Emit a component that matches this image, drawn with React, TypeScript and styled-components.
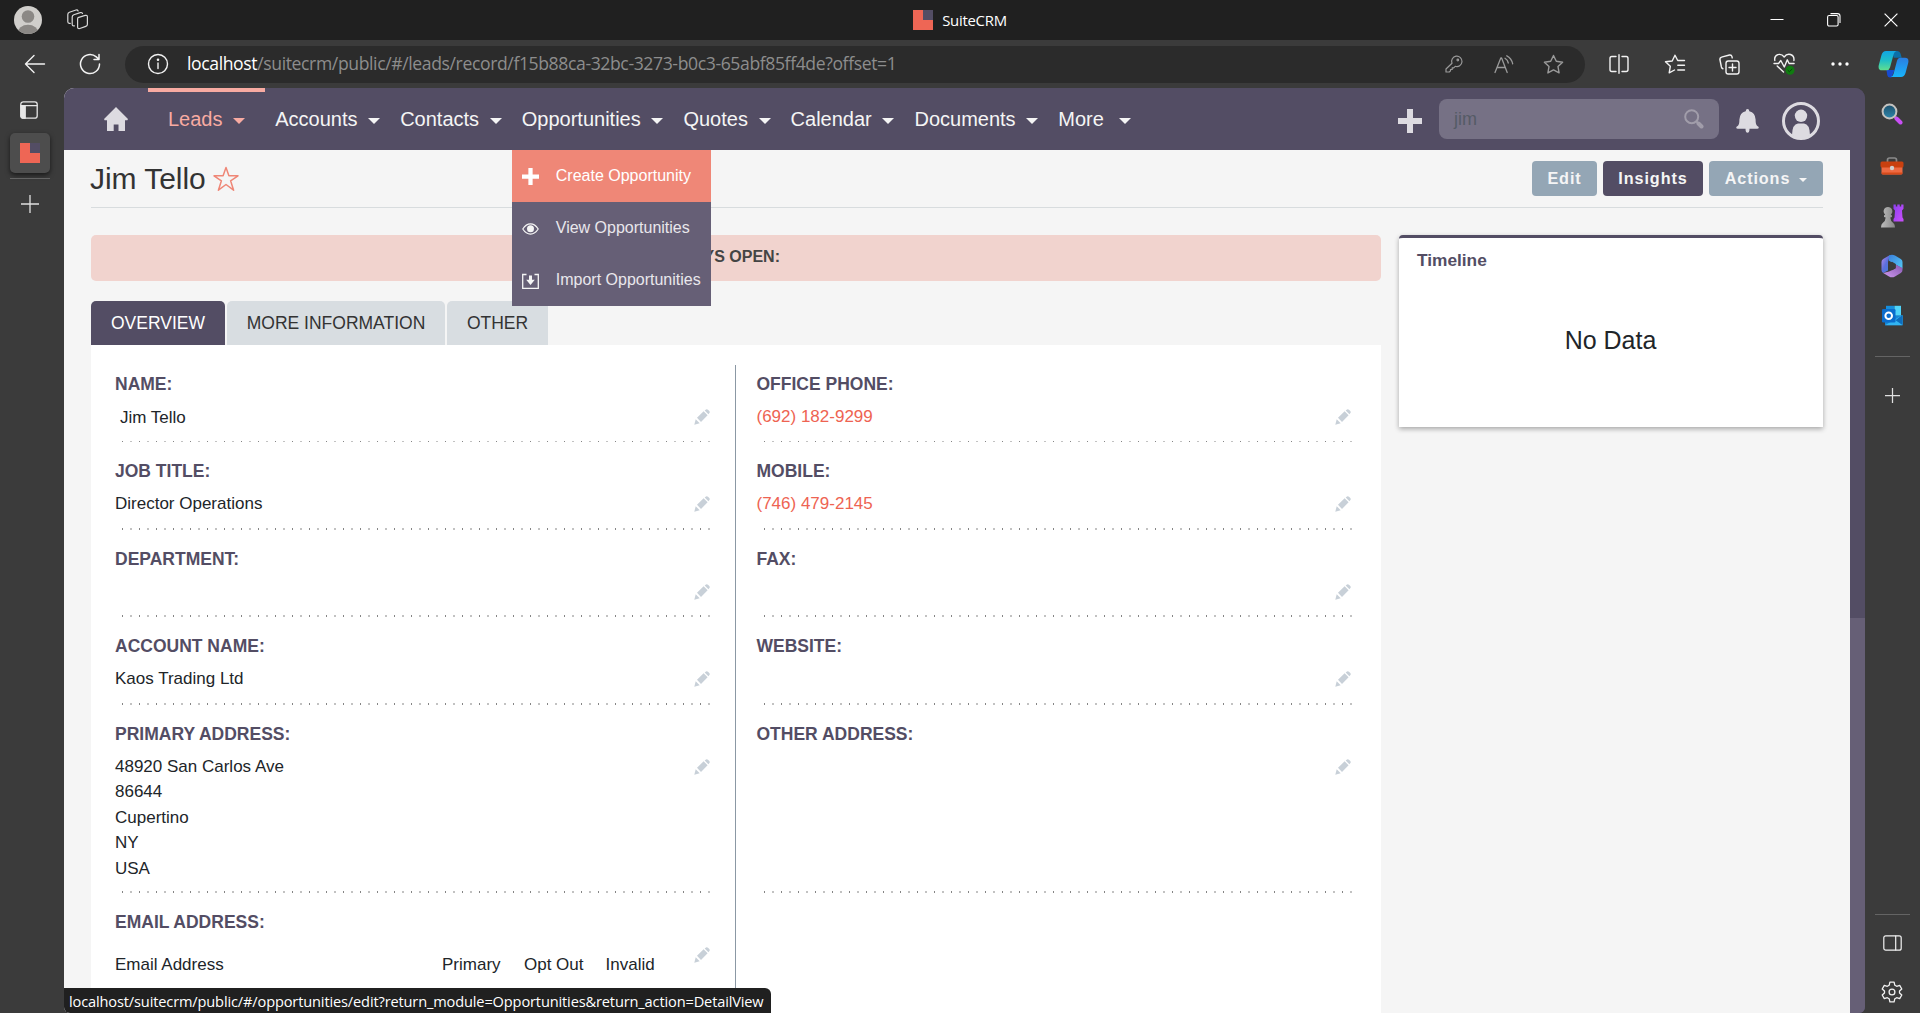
import React from "react";
import styled, { createGlobalStyle, css } from "styled-components";

const UI = `"Open Sans", "Noto Sans", sans-serif`;
const PAGE = `"Liberation Sans", Arial, sans-serif`;

const Global = createGlobalStyle`
  * { box-sizing: border-box; }
  body { margin: 0; background: #3b3b3b; font-family: ${PAGE}; overflow: hidden; }
  svg { display: block; flex: none; }
`;

/* ---------- browser chrome ---------- */

const Window = styled.div`
  display: flex;
  flex-direction: column;
  height: 100vh;
  overflow: hidden;
  background: #3b3b3b;
`;

const TitleBar = styled.header`
  display: grid;
  grid-template-columns: 1fr auto 1fr;
  align-items: center;
  flex: none;
  height: 40px;
  background: #202020;
  color: #fff;
`;

const TitleLeft = styled.div`
  display: flex;
  align-items: center;
  gap: 25px;
  padding-left: 14px;
`;

const TitleCenter = styled.div`
  display: flex;
  align-items: center;
  gap: 9px;
  font: 14.9px/20px ${UI};
  letter-spacing: -0.25px;
`;

const TitleRight = styled.div`
  display: flex;
  align-items: center;
  justify-content: flex-end;
  gap: 43px;
  padding-right: 22px;
`;

const Toolbar = styled.div`
  display: flex;
  align-items: center;
  flex: none;
  height: 48px;
`;

const Slot = styled.div<{ $w: number }>`
  display: flex;
  align-items: center;
  justify-content: center;
  flex: none;
  width: ${(p) => p.$w}px;
  height: 37px;
`;

const AddressBar = styled.div`
  display: flex;
  align-items: center;
  width: 1460px;
  height: 37px;
  margin-right: 6px;
  padding: 0 7px 0 2px;
  border-radius: 19px;
  background: #2b2b2b;
`;

const Url = styled.div`
  flex: 1;
  margin-left: -1px;
  padding-bottom: 2px;
  color: #8d8d8d;
  font: 17.6px/34px ${UI};
  letter-spacing: -0.39px;
  white-space: nowrap;
  b { color: #fff; font-weight: 400; }
`;

const Below = styled.div`
  display: flex;
  flex: 1;
  min-height: 0;
`;

const TabRail = styled.aside`
  display: flex;
  flex-direction: column;
  align-items: center;
  flex: none;
  width: 64px;
  padding: 13px 4px 0 0;
`;

const TabToggle = styled.div`
  padding-right: 2px;
`;

const RailTab = styled.div`
  display: flex;
  align-items: center;
  justify-content: center;
  width: 40px;
  height: 40px;
  margin: 14px 0 5px;
  border-radius: 5px;
  background: #4d4d4d;
  box-shadow: 0 2px 5px rgba(0, 0, 0, 0.6);
`;

const RailLine = styled.div<{ $w: number }>`
  flex: none;
  width: ${(p) => p.$w}px;
  height: 1px;
  background: #646464;
`;

const AppRail = styled.aside`
  display: flex;
  flex-direction: column;
  align-items: center;
  flex: none;
  width: 55px;
  padding-right: 1px;
`;

const RailCell = styled.div<{ $h: number }>`
  display: flex;
  align-items: center;
  justify-content: center;
  flex: none;
  height: ${(p) => p.$h}px;
`;

const Spacer = styled.div`
  flex: 1;
`;

const StatusTip = styled.div`
  position: fixed;
  left: 64px;
  bottom: 0;
  width: 707px;
  height: 25px;
  padding: 1px 0 0 5px;
  border-radius: 0 6px 0 6px;
  background: #202020;
  color: #fff;
  font: 14.6px/25px ${UI};
  letter-spacing: -0.145px;
  white-space: nowrap;
`;

/* ---------- CRM page ---------- */

const Viewport = styled.div`
  display: flex;
  width: 1801px;
  border-radius: 10px 10px 6px 6px;
  overflow: hidden;
  background: #534d64;
`;

const Page = styled.div`
  width: 1786px;
  height: 100%;
  background: #f5f5f5;
`;

const Scrollbar = styled.div`
  display: flex;
  align-items: flex-end;
  width: 15px;
  background: #534d64;
`;

const Thumb = styled.div`
  width: 15px;
  height: 395px;
  background: #665f76;
`;

const Nav = styled.nav`
  display: flex;
  align-items: stretch;
  height: 62px;
  background: #534d64;
  color: #f5f5f5;
`;

const Home = styled.div`
  display: flex;
  align-items: center;
  padding: 0 20px 0 40px;
`;

const NavItem = styled.div<{ $active?: boolean; $gap?: number }>`
  position: relative;
  display: flex;
  align-items: center;
  gap: ${(p) => p.$gap ?? 10.7}px;
  padding: 0 10px;
  font-size: 20px;
  white-space: nowrap;
  ${(p) =>
    p.$active &&
    css`
      padding: 0 20px;
      color: #f8aba2;
      box-shadow: inset 0 4px 0 #f8aba2;
    `}
`;

const Caret = styled.span<{ $size?: number }>`
  width: 0;
  height: 0;
  margin-top: ${(p) => (p.$size ? 3 : 4)}px;
  border: ${(p) => p.$size ?? 6}px solid transparent;
  border-top-color: currentColor;
  border-bottom: 0;
`;

const Menu = styled.div`
  position: absolute;
  z-index: 2;
  top: 62px;
  left: 0;
  width: 199px;
  background: #665f76;
`;

const MenuItem = styled.div<{ $hot?: boolean }>`
  display: flex;
  align-items: center;
  gap: 17px;
  height: 52px;
  padding: 0 0 1px 10px;
  color: ${(p) => (p.$hot ? "#fff" : "#e9e7ec")};
  background: ${(p) => (p.$hot ? "#ef8777" : "transparent")};
  font-size: 16px;
  svg { margin-top: 2px; }
`;

const NavTools = styled.div`
  display: flex;
  align-items: center;
  margin-left: auto;
  padding: 4px 30px 0 0;
`;

const Search = styled.div`
  display: flex;
  align-items: center;
  justify-content: space-between;
  width: 280px;
  height: 40px;
  margin: -4px 17px 0;
  padding: 0 15px;
  border-radius: 8px;
  background: #767185;
  color: #555b66;
  font-size: 18px;
`;

const Content = styled.main`
  padding: 0 27px;
`;

const RecordHeader = styled.div`
  display: flex;
  align-items: center;
  height: 58px;
  border-bottom: 1px solid #d8dcde;
  color: #333;
`;

const Title = styled.h1`
  margin: 0 7px 0 -1px;
  font-size: 30px;
  font-weight: 400;
  letter-spacing: -0.05px;
`;

const Button = styled.div<{ $w: number; $dark?: boolean }>`
  display: flex;
  align-items: center;
  justify-content: center;
  gap: 9px;
  width: ${(p) => p.$w}px;
  height: 35px;
  margin-left: 6px;
  border-radius: 4px;
  background: ${(p) => (p.$dark ? "#534d64" : "#94a6b5")};
  color: #f5f5f5;
  font-size: 16.2px;
  font-weight: 700;
  letter-spacing: 0.9px;
`;

const Columns = styled.div`
  display: flex;
  align-items: flex-start;
  gap: 18px;
  margin-top: 27px;
`;

const Record = styled.section`
  width: 1290px;
`;

const Banner = styled.div`
  display: flex;
  align-items: center;
  justify-content: flex-end;
  height: 46px;
  margin-bottom: 20px;
  padding: 0 601px 2px 0;
  border-radius: 5px;
  background: #f1d3ce;
  color: #444;
  font-size: 16px;
  font-weight: 700;
  line-height: 20px;
`;

const Tabs = styled.div`
  display: flex;
  gap: 2px;
`;

const Tab = styled.div<{ $w: number; $active?: boolean }>`
  width: ${(p) => p.$w}px;
  height: 44px;
  border-radius: 5px 5px 0 0;
  background: ${(p) => (p.$active ? "#534d64" : "#d8dde1")};
  color: ${(p) => (p.$active ? "#fff" : "#333")};
  font-size: 17.5px;
  line-height: 45px;
  text-align: center;
  white-space: nowrap;
`;

const Panel = styled.div`
  display: flex;
  height: 700px;
  padding-top: 10px;
  background: #fff;
`;

const FieldColumn = styled.div<{ $right?: boolean }>`
  width: ${(p) => (p.$right ? 645 : 644)}px;
  padding: ${(p) => (p.$right ? "0 30.5px 0 20.5px" : "0 25.5px 0 24px")};
`;

const Divider = styled.div`
  width: 1px;
  margin-top: 10px;
  background: #8b98a4;
`;

const Field = styled.div<{ $h: number }>`
  display: flex;
  flex-direction: column;
  height: ${(p) => p.$h}px;
  padding-top: 19px;
`;

const Label = styled.div`
  height: 20px;
  color: #534d64;
  font-size: 17.5px;
  font-weight: 700;
  line-height: 20px;
`;

const FieldBody = styled.div`
  display: flex;
  justify-content: space-between;
  flex: 1;
  padding-top: 9px;
  svg { margin-top: 6px; }
`;

type ValueKind = "text" | "link" | "name" | "table";

const Value = styled.div<{ $kind: ValueKind }>`
  padding-top: 1px;
  color: ${(p) => (p.$kind === "link" ? "#ee6352" : "#212529")};
  font-size: 17px;
  line-height: 25.4px;
  ${(p) => p.$kind === "name" && css`padding: 2px 0 0 5px;`}
  ${(p) =>
    p.$kind === "table" &&
    css`
      display: grid;
      grid-template-columns: 327px 82px 81.5px auto;
      padding-top: 11px;
    `}
`;

const Dots = styled.div<{ $thin?: boolean }>`
  height: ${(p) => (p.$thin ? 1 : 2)}px;
  margin: 0 -2px 0 6px;
  background: repeating-linear-gradient(
    90deg,
    transparent 0 1px,
    #858585 1px 2px,
    transparent 2px 9px,
    #c2c2c2 9px 11px,
    transparent 11px 17px
  );
`;

const Card = styled.section`
  width: 424px;
  height: 192px;
  padding: 12px 18px;
  border-top: 3px solid #534d64;
  border-radius: 4px 4px 0 0;
  background: #fff;
  box-shadow: 0 2px 5px rgba(0, 0, 0, 0.32);
`;

const CardTitle = styled.div`
  color: #534d64;
  font-size: 17.3px;
  font-weight: 700;
  line-height: 20px;
`;

const CardEmpty = styled.div`
  margin: 55px 1px 0 0;
  color: #212529;
  font-size: 25px;
  line-height: 30px;
  text-align: center;
`;

/* ---------- icons ---------- */

const line = { fill: "none", stroke: "#f2f2f2", strokeWidth: 1.4, strokeLinecap: "round", strokeLinejoin: "round" } as const;

const Logo = () => (
  <svg width="20" height="20" viewBox="0 0 20 20">
    <path d="M0 0h20v20H0z" fill="#ee6655" />
    <path d="M10 0h10v10H10z" fill="#534d64" />
  </svg>
);

const Avatar = () => (
  <svg width="28" height="28" viewBox="0 0 28 28">
    <clipPath id="avatar"><circle cx="14" cy="14" r="14" /></clipPath>
    <g clipPath="url(#avatar)">
      <path d="M0 0h28v28H0z" fill="#d0cecb" />
      <circle cx="14" cy="10.5" r="6.3" fill="#8b8885" />
      <ellipse cx="14" cy="27" rx="10.5" ry="8.3" fill="#8b8885" />
    </g>
  </svg>
);

const Workspaces = () => (
  <svg width="22" height="22" viewBox="0 0 22 22" {...line} stroke="#d8d8d8" strokeWidth={1.2}>
    <path d="M11 8.6l7.2-2.2q2.2-.5 2.2 1.5v7.3q0 1.6-1.6 2.2l-6 2.1q-2.2.5-2.2-1.5v-7.4q0-1.5.4-2z" />
    <path d="M7.4 16.8l-.7.1q-1.5 0-1.5-1.5V8q0-1.6 1.6-2.2l6.5-2.2q1.6-.4 2.2.9" />
    <path d="M3.3 14.3l-1 .1Q.8 14.3.8 12.8V5.4q0-1.6 1.6-2.2L9 1q1.5-.4 2.1.9" />
  </svg>
);

const Back = () => (
  <svg width="22" height="20" viewBox="0 0 22 20" {...line}><path d="M20.5 10H1.5M10 1.5L1.5 10l8.5 8.5" /></svg>
);

const Reload = () => (
  <svg width="22" height="22" viewBox="0 0 22 22" {...line} strokeWidth={1.5}><path d="M20.5 11a9.5 9.5 0 1 1-3.2-7.1l2.5 2.4M20 1.5v5h-5" /></svg>
);

const Info = () => (
  <svg width="22" height="22" viewBox="0 0 22 22" {...line}>
    <circle cx="11" cy="11" r="9.5" /><path d="M11 10v5.5" /><circle cx="11" cy="6.8" r=".6" fill="#fff" />
  </svg>
);

const Key = () => (
  <svg width="18" height="18" viewBox="0 0 18 18" {...line} stroke="#9a9a9a" strokeWidth={1.2}>
    <path d="M7 8.3a5.2 5.2 0 1 1 3.2 3L8.7 12.8H7.2v1.7H5.5v1.3L4.3 17H1v-3z" /><circle cx="12.8" cy="5" r=".8" />
  </svg>
);

const ReadAloud = () => (
  <svg width="20" height="19" viewBox="0 0 20 19" {...line} stroke="#9a9a9a" strokeWidth={1.3}>
    <path d="M1 17.5L6.8 3h.8l5.6 14.5M3 12.5h8.4M11 3.3q2.6 1.5 3.3 4.7M12.8.8q4.6 2.2 5.9 8" />
  </svg>
);

const Star = () => (
  <svg width="21" height="21" viewBox="0 0 21 21" {...line} stroke="#9a9a9a">
    <path d="M10.5 1.5l2.8 5.8 6.3.9-4.6 4.4 1.1 6.3-5.6-3-5.6 3 1.1-6.3-4.6-4.4 6.3-.9z" />
  </svg>
);

const Split = () => (
  <svg width="20" height="20" viewBox="0 0 20 20" {...line}>
    <path d="M7 2.5H2.8Q1 2.5 1 4.5v11q0 2 1.8 2H7M13 2.5h4.2Q19 2.5 19 4.5v11q0 2-1.8 2H13M10 .8v18.4" />
  </svg>
);

const Favorites = () => (
  <svg width="22" height="20" viewBox="0 0 22 20" {...line}>
    <path d="M20.5 6.5h-6.8L11 1.2 8.2 7 1.5 7.8l4.8 4.5L5.2 18.8l5.3-2.8M13.8 11.3h6.7M13.8 16h6.7" />
  </svg>
);

const Collections = () => (
  <svg width="21" height="21" viewBox="0 0 21 21" {...line}>
    <rect x="7" y="7" width="13" height="13" rx="2.2" /><path d="M13.5 10v7M10 13.5h7M4 14.8Q2.7 14.3 2.4 13L.9 5.5Q.7 3.6 2.5 3.2L10.5 1q2-.3 2.5 1.6l.2 1.3" />
  </svg>
);

const Heart = () => (
  <svg width="23" height="22" viewBox="0 0 23 22" {...line}>
    <path d="M1.8 7.5Q1 3 4.8 1.6 8.7.5 11.2 4 13.5.6 17.5 1.5q4 1.4 3.4 6M4.2 13l6.3 6M1 10.5h4.5l2.3-3 3.5 6.5 3-7.2 1.8 3.7h5" />
    <circle cx="17" cy="17.3" r="4.5" fill="#107c10" stroke="none" /><path d="M15 17.4l1.4 1.3 2.6-2.5" stroke="#064806" strokeWidth="1" />
  </svg>
);

const Ellipsis = () => (
  <svg width="18" height="4" viewBox="0 0 18 4" fill="#fff"><circle cx="2" cy="2" r="1.7" /><circle cx="9" cy="2" r="1.7" /><circle cx="16" cy="2" r="1.7" /></svg>
);

const Copilot = () => (
  <svg width="31" height="28" viewBox="0 0 31 28">
    <defs>
      <linearGradient id="cp1" x1="0" y1="0" x2="0" y2="1"><stop stopColor="#11a5e4" /><stop offset=".5" stopColor="#20bfc6" /><stop offset="1" stopColor="#61df8e" /></linearGradient>
      <linearGradient id="cp2" x1="0" y1="0" x2="0" y2="1"><stop stopColor="#2b7de0" /><stop offset="1" stopColor="#18b5fb" /></linearGradient>
    </defs>
    <path d="M14 1h5.5q2.3 0 3 2.5l1.2 4.2h-8z" fill="#0b6fa8" />
    <path d="M8.5 20h8l-3 7.5H12q-2.2 0-2.8-2.5z" fill="#174bd0" />
    <path d="M8 1h10.5q-2 .6-2.8 3L12 17.5Q11.2 20.3 8.5 20.3H4Q-.3 20.3.8 15L3.5 5Q4.7 1 8 1z" fill="url(#cp1)" />
    <path d="M23 27H12.8q2-.6 2.7-3L19 10.8Q19.9 7.7 22.5 7.7H27q4.3 0 3.2 5.2L27.5 23Q26.3 27 23 27z" fill="url(#cp2)" />
  </svg>
);

const Minimize = () => <svg width="14" height="14" viewBox="0 0 14 14"><path d="M.5 6.5h13" stroke="#fff" /></svg>;
const Restore = () => (
  <svg width="14" height="14" viewBox="0 0 14 14" fill="none" stroke="#fff" strokeWidth="1.1"><rect x=".6" y="2.5" width="10.5" height="10.5" rx="1.5" /><path d="M3.5.6h7q2.5 0 2.5 2.5v7" /></svg>
);
const Close = () => <svg width="14" height="14" viewBox="0 0 14 14"><path d="M.6.6l12.8 12.8M13.4.6L.6 13.4" stroke="#fff" strokeWidth="1.2" /></svg>;

const TabPanel = () => (
  <svg width="18" height="18" viewBox="0 0 18 18" {...line} stroke="#e6e6e6" strokeWidth={1.3}>
    <rect x=".8" y=".8" width="16.4" height="16.4" rx="2.5" /><path d="M1 4.7h16M5 5v12" /><path d="M1 5h4v12H3q-2 0-2-2z" fill="#e6e6e6" />
  </svg>
);

const Plus = ({ size, w = 1.3 }: { size: number; w?: number }) => (
  <svg width={size} height={size} viewBox="0 0 18 18" fill="none" stroke="#e0e0e0" strokeWidth={w}><path d="M9 0v18M0 9h18" /></svg>
);

const SearchApp = () => (
  <svg width="22" height="22" viewBox="0 0 22 22">
    <defs><linearGradient id="lens" x1="0" y1="0" x2="0" y2="1"><stop stopColor="#1d4f6c" /><stop offset="1" stopColor="#2f87ab" /></linearGradient></defs>
    <path d="M12.5 12.5l3 3" stroke="#999" strokeWidth="2.5" />
    <circle cx="8.5" cy="8.5" r="6.9" fill="url(#lens)" stroke="#c4c2bf" strokeWidth="2" />
    <path d="M15.5 15.5l4 4" stroke="#c94ff5" strokeWidth="4" strokeLinecap="round" />
  </svg>
);

const Toolbox = () => (
  <svg width="24" height="18" viewBox="0 0 24 18">
    <path d="M7.5 5V3q0-2 2-2h5q2 0 2 2v2" fill="none" stroke="#8a8a8a" strokeWidth="1.7" />
    <rect x="1.5" y="8" width="21" height="9.5" rx="1.5" fill="#ee6a42" />
    <rect x=".5" y="4.5" width="23" height="6" rx="1.5" fill="#c9400f" />
    <path d="M1.5 15.5h21v.6q0 1.4-1.5 1.4H3q-1.5 0-1.5-1.4z" fill="#d64a1b" />
    <circle cx="12" cy="11" r="2.2" fill="#cfcfcf" />
  </svg>
);

const Chess = () => (
  <svg width="24" height="24" viewBox="0 0 24 24">
    <defs>
      <linearGradient id="rook" x1="0" y1="0" x2="1" y2="1"><stop stopColor="#8d3ff0" /><stop offset="1" stopColor="#cb50fb" /></linearGradient>
      <linearGradient id="pawn" x1="0" y1="0" x2="1" y2="0"><stop stopColor="#bdbdbd" /><stop offset="1" stopColor="#868686" /></linearGradient>
    </defs>
    <path d="M13.5.5h2.3v2h1.5v-2h2.4v2h1.5v-2h2.3v4.3L22 6.5l.5 7 1 1.5v2.5h-10V15l1-1.5.5-7-1.5-1.7z" fill="url(#rook)" />
    <path d="M8 3a4.3 4.3 0 0 1 2.8 7.6l1.2.9v1.500l-1.700.5q.3 4 3 5.500 1.700 1 1.700 4.500H1q0-3.500 1.700-4.500 2.700-1.500 3-5.500L4 13v-1.500l1.200-.9A4.300 4.300 0 0 1 8 3z" fill="url(#pawn)" />
  </svg>
);

const M365 = () => (
  <svg width="22" height="24" viewBox="0 0 22 24">
    <defs>
      <linearGradient id="mL" x1="0" y1="0" x2="1" y2="1"><stop stopColor="#b98bea" /><stop offset=".5" stopColor="#5b6fdd" /><stop offset="1" stopColor="#3f7fdc" /></linearGradient>
      <linearGradient id="mR" x1="0" y1="0" x2="1" y2="1"><stop stopColor="#3b7fdb" /><stop offset="1" stopColor="#53cbf6" /></linearGradient>
      <linearGradient id="mB" x1="0" y1="1" x2="1" y2="0"><stop stopColor="#cf9af0" /><stop offset="1" stopColor="#8557b0" /></linearGradient>
    </defs>
    <path d="M9 1L2.2 4.9Q.5 6 .5 8v8q0 2 1.7 3.1L7 16.5V8z" fill="url(#mL)" />
    <path d="M8 1.6q3-1.8 6 0L19.8 4.9Q21.5 6 21.5 8v6.5L14.5 10.5 8 6.8z" fill="url(#mR)" />
    <path d="M21.5 14v2q0 2-1.7 3.1L14 22.4q-3 1.8-6 0L2.2 19.1 8 17.5l6.5-3v-4z" fill="url(#mB)" />
    <path d="M11 7.7l3.8 2.2v4.2L11 16.3l-3.800-2.200V9.900z" fill="#3b3b3b" />
  </svg>
);

const Outlook = () => (
  <svg width="21" height="21" viewBox="0 0 21 21">
    <path d="M4 .8h8.5v10H4z" fill="#168edb" /><path d="M12.5.8H19v10h-6.5z" fill="#4fd4fa" />
    <path d="M3 10.5h17.5v9.7H3z" fill="#1687d6" /><path d="M3 20.2L20.5 10v10.2z" fill="#31b4f2" />
    <path d="M20.5 10v10l-7-4.8z" fill="#0d6dbd" />
    <rect x="0" y="4" width="13.5" height="13.5" rx="1.3" fill="#0a6ccc" />
    <circle cx="6.7" cy="10.7" r="3.3" fill="none" stroke="#fff" strokeWidth="2" />
  </svg>
);

const SidePanel = () => (
  <svg width="19" height="16" viewBox="0 0 19 16" {...line} strokeWidth={1.2}><rect x=".8" y=".8" width="17.4" height="14.4" rx="2" /><path d="M12.7 1v14" /></svg>
);

const Gear = () => (
  <svg width="22" height="22" viewBox="0 0 22 22" {...line} strokeWidth={1.3}>
    <path d="M8.9 1.2h4.2l.7 3 1.9 1.1 3-.9 2.1 3.6-2.3 2.1v1.8l2.3 2.1-2.1 3.6-3-.9-1.9 1.1-.7 3H8.9l-.7-3-1.9-1.1-3 .9-2.1-3.6 2.3-2.1v-1.8L1.2 8l2.1-3.6 3 .9 1.9-1.1z" />
    <circle cx="11" cy="11" r="2.9" />
  </svg>
);

const HomeIcon = () => (
  <svg width="24" height="24" viewBox="0 0 24 24" fill="#dddbe1"><path d="M12 0l12 12-.6 1.2H21V24h-6.5v-6.5h-4.8V24H3V13.2H.6L0 12z" /></svg>
);

const BigPlus = ({ size = 24, color = "#dddbe1" }: { size?: number; color?: string }) => (
  <svg width={size} height={size} viewBox="0 0 24 24" fill={color}><path d="M9 0h6v9h9v6h-9v9H9v-9H0V9h9z" /></svg>
);

const Eye = () => (
  <svg width="17" height="12" viewBox="0 0 17 12"><path d="M.8 6Q4 .9 8.5.9T16.2 6Q13 11.1 8.5 11.1T.8 6z" fill="none" stroke="#f5f5f5" strokeWidth="1.2" /><circle cx="8.5" cy="5.8" r="3.5" fill="#f5f5f5" /></svg>
);

const Import = () => (
  <svg width="17" height="16" viewBox="0 0 17 16"><path d="M4.5 1.5H.7v13.8h15.6V1.5h-3.8" fill="none" stroke="#f5f5f5" strokeWidth="1.3" /><path d="M7 2.5h3v4.3h2.8L8.5 12 4.2 6.8H7z" fill="#f5f5f5" /></svg>
);

const SearchIcon = () => (
  <svg width="20" height="20" viewBox="0 0 20 20" fill="none" stroke="#a19daa"><circle cx="7.7" cy="7.7" r="6.5" strokeWidth="2" /><path d="M12.5 12.5l2 2" strokeWidth="2" /><path d="M14.5 14.5l3 3" strokeWidth="4" strokeLinecap="round" /></svg>
);

const Bell = () => (
  <svg width="23" height="24" viewBox="0 0 23 24" fill="#dddbe1"><path d="M11.5 0q1.7 0 1.8 2.2 6 1.5 6.3 8.3 0 5 1.4 6.2 2 .8 1.8 2-.2 1-1.6 1h-7.7q0 4-2 4t-2-4H1.8q-1.4 0-1.6-1-.2-1.2 1.8-2 1.4-1.2 1.4-6.200Q3.700 3.700 9.700 2.200 9.800 0 11.500 0z" /></svg>
);

const User = () => (
  <svg width="38" height="38" viewBox="0 0 38 38">
    <circle cx="19" cy="19" r="17.5" fill="none" stroke="#dddbe1" strokeWidth="3" />
    <circle cx="19" cy="13.8" r="6.2" fill="#dddbe1" />
    <path d="M10 33q.3-11 6-11.5h6q5.7.5 6 11.5-9 6-18 0z" fill="#dddbe1" />
  </svg>
);

const StarOutline = () => (
  <svg width="26" height="26" viewBox="0 0 26 26" fill="none" stroke="#ef8777" strokeWidth="1.5" strokeLinejoin="round"><path d="M13 1.5l2.9 8.2 9.1.1-7.4 5 3 9.4-7.6-5.7-7.6 5.7 3-9.4L1 9.8l9.1-.1z" /></svg>
);

const Pencil = () => (
  <svg width="16" height="16" viewBox="0 0 16 16" fill="#c8d0d8"><path d="M1.7 10.2l4 4L.3 15.7zM3 8.8l6.6-6.5 4 4L7 12.9zM10.7 1.5L12 .5q1-.6 2 .3l1.3 1.3q.8 1 .1 2l-1 1.2z" /></svg>
);

/* ---------- data ---------- */

type FieldData = { label: string; lines?: string[]; kind?: ValueKind; h: number };

const leftFields: FieldData[] = [
  { label: "NAME:", lines: ["Jim Tello"], kind: "name", h: 87 },
  { label: "JOB TITLE:", lines: ["Director Operations"], h: 88 },
  { label: "DEPARTMENT:", h: 87 },
  { label: "ACCOUNT NAME:", lines: ["Kaos Trading Ltd"], h: 88 },
  { label: "PRIMARY ADDRESS:", lines: ["48920 San Carlos Ave", "86644", "Cupertino", "NY", "USA"], h: 188 },
];

const rightFields: FieldData[] = [
  { label: "OFFICE PHONE:", lines: ["(692) 182-9299"], kind: "link", h: 87 },
  { label: "MOBILE:", lines: ["(746) 479-2145"], kind: "link", h: 88 },
  { label: "FAX:", h: 87 },
  { label: "WEBSITE:", h: 88 },
  { label: "OTHER ADDRESS:", h: 188 },
];

const renderField = (f: FieldData, i: number) => (
  <Field key={f.label} $h={f.h}>
    <Label>{f.label}</Label>
    <FieldBody>
      <Value $kind={f.kind ?? "text"}>
        {f.lines?.map((l) => <div key={l}>{l}</div>)}
      </Value>
      <Pencil />
    </FieldBody>
    <Dots $thin={i === 0} />
  </Field>
);

export default function App() {
  return (
    <Window>
      <Global />
      <TitleBar>
        <TitleLeft><Avatar /><Workspaces /></TitleLeft>
        <TitleCenter><Logo />SuiteCRM</TitleCenter>
        <TitleRight><Minimize /><Restore /><Close /></TitleRight>
      </TitleBar>

      <Toolbar>
        <Slot $w={70}><Back /></Slot>
        <Slot $w={40}><Reload /></Slot>
        <Slot $w={15} />
        <AddressBar>
          <Slot $w={61}><Info /></Slot>
          <Url><b>localhost</b>/suitecrm/public/#/leads/record/f15b88ca-32bc-3273-b0c3-65abf85ff4de?offset=1</Url>
          <Slot $w={50}><Key /></Slot>
          <Slot $w={50}><ReadAloud /></Slot>
          <Slot $w={49}><Star /></Slot>
        </AddressBar>
        <Slot $w={56}><Split /></Slot>
        <Slot $w={55}><Favorites /></Slot>
        <Slot $w={55}><Collections /></Slot>
        <Slot $w={55}><Heart /></Slot>
        <Slot $w={55}><Ellipsis /></Slot>
        <Slot $w={52}><Copilot /></Slot>
      </Toolbar>

      <Below>
        <TabRail>
          <TabToggle><TabPanel /></TabToggle>
          <RailTab><Logo /></RailTab>
          <RailLine $w={40} />
          <RailCell $h={50}><Plus size={18} /></RailCell>
        </TabRail>

        <Viewport>
          <Page>
            <Nav>
              <Home><HomeIcon /></Home>
              <NavItem $active>Leads<Caret /></NavItem>
              <NavItem>Accounts<Caret /></NavItem>
              <NavItem>Contacts<Caret /></NavItem>
              <NavItem>
                Opportunities<Caret />
                <Menu>
                  <MenuItem $hot><BigPlus size={17} color="#fff" />Create Opportunity</MenuItem>
                  <MenuItem><Eye />View Opportunities</MenuItem>
                  <MenuItem><Import />Import Opportunities</MenuItem>
                </Menu>
              </NavItem>
              <NavItem>Quotes<Caret /></NavItem>
              <NavItem>Calendar<Caret /></NavItem>
              <NavItem>Documents<Caret /></NavItem>
              <NavItem $gap={15}>More<Caret /></NavItem>
              <NavTools>
                <BigPlus />
                <Search>jim<SearchIcon /></Search>
                <Bell />
                <Slot $w={23} />
                <User />
              </NavTools>
            </Nav>

            <Content>
              <RecordHeader>
                <Title>Jim Tello</Title>
                <StarOutline />
                <Spacer />
                <Button $w={65}>Edit</Button>
                <Button $w={100} $dark>Insights</Button>
                <Button $w={114}>Actions<Caret $size={4} /></Button>
              </RecordHeader>

              <Columns>
                <Record>
                  <Banner>DAYS OPEN:</Banner>
                  <Tabs>
                    <Tab $w={134} $active>OVERVIEW</Tab>
                    <Tab $w={218}>MORE INFORMATION</Tab>
                    <Tab $w={101}>OTHER</Tab>
                  </Tabs>
                  <Panel>
                    <FieldColumn>
                      {leftFields.map(renderField)}
                      <Field $h={120}>
                        <Label>EMAIL ADDRESS:</Label>
                        <FieldBody>
                          <Value $kind="table">
                            <span>Email Address</span><span>Primary</span><span>Opt Out</span><span>Invalid</span>
                          </Value>
                          <Pencil />
                        </FieldBody>
                      </Field>
                    </FieldColumn>
                    <Divider />
                    <FieldColumn $right>{rightFields.map(renderField)}</FieldColumn>
                  </Panel>
                </Record>

                <Card>
                  <CardTitle>Timeline</CardTitle>
                  <CardEmpty>No Data</CardEmpty>
                </Card>
              </Columns>
            </Content>
          </Page>
          <Scrollbar><Thumb /></Scrollbar>
        </Viewport>

        <AppRail>
          <RailCell $h={52}><SearchApp /></RailCell>
          <RailCell $h={51}><Toolbox /></RailCell>
          <RailCell $h={49}><Chess /></RailCell>
          <RailCell $h={51}><M365 /></RailCell>
          <RailCell $h={49}><Outlook /></RailCell>
          <RailCell $h={32}><RailLine $w={35} /></RailCell>
          <RailCell $h={47}><Plus size={15} w={1.5} /></RailCell>
          <Spacer />
          <RailLine $w={35} />
          <RailCell $h={55}><SidePanel /></RailCell>
          <RailCell $h={43}><Gear /></RailCell>
        </AppRail>
      </Below>

      <StatusTip>localhost/suitecrm/public/#/opportunities/edit?return_module=Opportunities&amp;return_action=DetailView</StatusTip>
    </Window>
  );
}
